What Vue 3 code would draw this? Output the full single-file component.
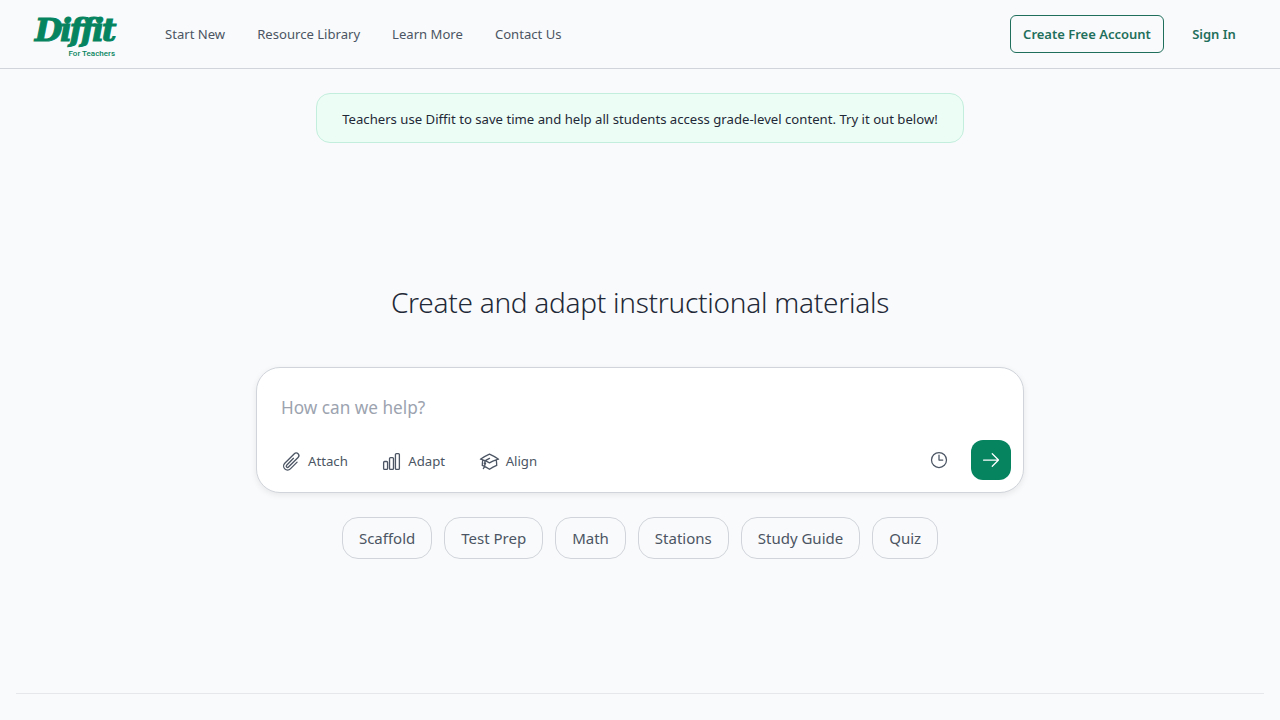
<script setup>
const navLinks = ['Start New', 'Resource Library', 'Learn More', 'Contact Us']
const tools = [
  { label: 'Attach', icon: 'clip' },
  { label: 'Adapt', icon: 'bars' },
  { label: 'Align', icon: 'cap' }
]
const chips = ['Scaffold', 'Test Prep', 'Math', 'Stations', 'Study Guide', 'Quiz']
</script>

<template>
  <div class="page">
    <header class="topbar">
      <div class="brand">
        <span class="brand-name">Diffit</span>
        <span class="brand-sub">For Teachers</span>
      </div>
      <nav class="nav">
        <a v-for="link in navLinks" :key="link" class="nav-link">{{ link }}</a>
      </nav>
      <div class="auth">
        <button class="btn-outline">Create Free Account</button>
        <button class="btn-text">Sign In</button>
      </div>
    </header>

    <div class="notice">Teachers use Diffit to save time and help all students access grade-level content. Try it out below!</div>

    <main class="hero">
      <h1 class="title">Create and adapt instructional materials</h1>
      <section class="composer">
        <div class="placeholder">How can we help?</div>
        <div class="composer-row">
          <div class="tools">
            <button v-for="tool in tools" :key="tool.label" class="tool">
              <svg class="tool-icon" viewBox="0 0 24 24" fill="none" stroke="currentColor" stroke-width="1.5" stroke-linecap="round" stroke-linejoin="round">
                <path v-if="tool.icon === 'clip'" d="m18.375 12.739-7.693 7.693a4.5 4.5 0 0 1-6.364-6.364l10.94-10.94A3 3 0 1 1 19.5 7.372L8.552 18.32m.009-.01-.01.01m5.699-9.941-7.81 7.81a1.5 1.5 0 0 0 2.112 2.13" />
                <path v-if="tool.icon === 'bars'" d="M3 13.125C3 12.504 3.504 12 4.125 12h2.25c.621 0 1.125.504 1.125 1.125v6.75C7.5 20.496 6.996 21 6.375 21h-2.25A1.125 1.125 0 0 1 3 19.875v-6.75ZM9.75 8.625c0-.621.504-1.125 1.125-1.125h2.25c.621 0 1.125.504 1.125 1.125v11.25c0 .621-.504 1.125-1.125 1.125h-2.25a1.125 1.125 0 0 1-1.125-1.125V8.625ZM16.5 4.125c0-.621.504-1.125 1.125-1.125h2.25C20.496 3 21 3.504 21 4.125v15.75c0 .621-.504 1.125-1.125 1.125h-2.25a1.125 1.125 0 0 1-1.125-1.125V4.125Z" />
                <path v-if="tool.icon === 'cap'" d="M4.26 10.147a60.438 60.438 0 0 0-.491 6.347A48.62 48.62 0 0 1 12 20.904a48.62 48.62 0 0 1 8.232-4.41 60.46 60.46 0 0 0-.491-6.347m-15.482 0a50.636 50.636 0 0 0-2.658-.813A59.906 59.906 0 0 1 12 3.493a59.903 59.903 0 0 1 10.399 5.84c-.896.248-1.783.52-2.658.814m-15.482 0A50.717 50.717 0 0 1 12 13.489a50.702 50.702 0 0 1 7.74-3.342M6.75 15a.75.75 0 1 0 0-1.5.75.75 0 0 0 0 1.5Zm0 0v-3.675A55.378 55.378 0 0 1 12 8.443m-7.007 11.55A5.981 5.981 0 0 0 6.75 15.75v-1.5" />
              </svg>
              <span>{{ tool.label }}</span>
            </button>
          </div>
          <div class="actions">
            <svg class="clock" viewBox="0 0 24 24" fill="none" stroke="currentColor" stroke-width="1.5" stroke-linecap="round" stroke-linejoin="round">
              <path d="M12 6v6h4.5m4.5 0a9 9 0 1 1-18 0 9 9 0 0 1 18 0Z" />
            </svg>
            <button class="send" aria-label="Send">
              <svg viewBox="0 0 24 24" fill="none" stroke="currentColor" stroke-width="1.5" stroke-linecap="round" stroke-linejoin="round">
                <path d="M13.5 4.5 21 12m0 0-7.5 7.5M21 12H3" />
              </svg>
            </button>
          </div>
        </div>
      </section>
      <div class="chips">
        <button v-for="chip in chips" :key="chip" class="chip">{{ chip }}</button>
      </div>
    </main>

    <footer class="footer-rule"></footer>
  </div>
</template>

<style>
html, body { margin: 0; background: #f9fafb; }
</style>

<style scoped>
.page {
  height: 720px;
  overflow: hidden;
  display: flex;
  flex-direction: column;
  background: #f9fafb;
  font-family: "Noto Sans", "Open Sans", sans-serif;
  color: #1f2937;
}
.topbar {
  height: 68px;
  flex: none;
  display: flex;
  align-items: center;
  padding: 0 44px 0 33px;
  border-bottom: 1px solid #d1d5db;
}
.brand {
  width: 84px;
  height: 40px;
  display: flex;
  flex-direction: column;
  align-items: flex-end;
  color: #068460;
}
.brand-name {
  font-family: "DejaVu Serif", serif;
  font-style: italic;
  font-weight: 700;
  font-size: 32px;
  line-height: 32px;
  letter-spacing: -2.5px;
  -webkit-text-stroke: 1px #068460;
  margin-right: 3px;
}
.brand-sub {
  font-family: Roboto, sans-serif;
  font-size: 8px;
  line-height: 9px;
  font-weight: 500;
  margin-top: 3px;
  margin-right: 2px;
}
.nav {
  display: flex;
  gap: 32px;
  margin-left: 48px;
  white-space: nowrap;
}
.nav-link {
  font-size: 13.1px;
  color: #4b5563;
}
.auth {
  margin-left: auto;
  display: flex;
  align-items: center;
  gap: 28px;
  white-space: nowrap;
}
.btn-outline, .btn-text {
  font-family: inherit;
  font-size: 13px;
  font-weight: 600;
  color: #1f6f5c;
  background: none;
  padding: 0;
  cursor: pointer;
}
.btn-outline {
  width: 154px;
  height: 38px;
  border: 1px solid #1f6f5c;
  border-radius: 6px;
}
.btn-text { border: 0; width: 44px; white-space: nowrap; }
.notice {
  align-self: center;
  box-sizing: border-box;
  width: 648px;
  height: 50px;
  margin-top: 24px;
  padding-top: 1px;
  display: flex;
  align-items: center;
  justify-content: center;
  font-size: 13.15px;
  color: #1f2937;
  background: #ecfdf5;
  border: 1px solid #c3eedd;
  border-radius: 14px;
  white-space: nowrap;
}
.hero {
  display: flex;
  flex-direction: column;
  align-items: center;
  margin-top: 139px;
}
.title {
  margin: 0;
  font-size: 28px;
  line-height: 40px;
  font-weight: 300;
  letter-spacing: -0.27px;
  color: #1f2937;
}
.composer {
  box-sizing: border-box;
  width: 768px;
  height: 126px;
  margin-top: 45px;
  padding: 26px 12px 0 24px;
  background: #fff;
  border: 1px solid #d1d5db;
  border-radius: 24px;
  box-shadow: 0 2px 6px rgba(0, 0, 0, .08);
}
.placeholder {
  font-size: 17.2px;
  line-height: 28px;
  color: #9ca3af;
}
.composer-row {
  display: flex;
  justify-content: space-between;
  align-items: center;
  margin-top: 18px;
}
.tools { display: flex; gap: 33.5px; margin-top: 2px; }
.tool {
  display: flex;
  align-items: center;
  gap: 6px;
  padding: 0;
  border: 0;
  background: none;
  font-family: inherit;
  font-size: 13.2px;
  color: #4b5563;
}
.tool-icon { width: 21px; height: 21px; color: #4b5563; }
.actions { display: flex; align-items: center; gap: 22px; }
.clock { width: 20px; height: 20px; color: #4b5563; }
.send {
  width: 40px;
  height: 40px;
  padding: 0;
  display: flex;
  align-items: center;
  justify-content: center;
  background: #068460;
  border: 0;
  border-radius: 12px;
  color: #fff;
}
.send svg { width: 20px; height: 20px; }
.chips {
  display: flex;
  gap: 12px;
  margin-top: 24px;
}
.chip {
  height: 42px;
  padding: 0 16px;
  font-family: inherit;
  font-size: 15px;
  color: #4b5563;
  background: none;
  border: 1px solid #d1d5db;
  border-radius: 16px;
}
.footer-rule {
  margin: auto 16px 26px;
  border-top: 1px solid #e5e7eb;
}
</style>
